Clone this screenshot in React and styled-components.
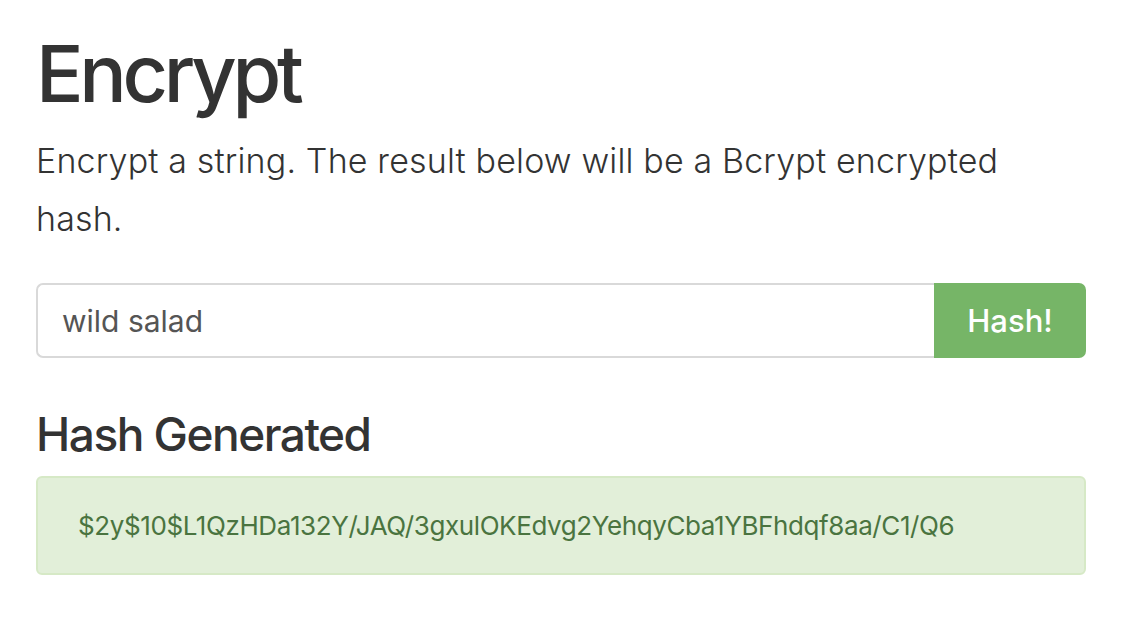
import React from "react";
import styled, { createGlobalStyle } from "styled-components";

const GlobalStyle = createGlobalStyle`
  html, body {
    margin: 0;
    padding: 0;
    background: #ffffff;
  }
  body {
    font-family: Inter, "Liberation Sans", sans-serif;
    color: #333333;
  }
`;

const Container = styled.main`
  width: 1050px;
  padding: 0 36px;
`;

const Title = styled.h1`
  margin: 0;
  padding-top: 23px;
  font-size: 79px;
  line-height: 100px;
  font-weight: 500;
  letter-spacing: -4.3px;
  color: #333333;
`;

const Lead = styled.p`
  max-width: 1010px;
  margin: 9px 0 0;
  font-size: 34px;
  line-height: 58px;
  font-weight: 300;
  letter-spacing: 0.15px;
  color: #333333;
`;

const InputGroup = styled.form`
  display: flex;
  margin-top: 35px;
  height: 75px;
`;

const TextInput = styled.input`
  flex: 1;
  min-width: 0;
  box-sizing: border-box;
  height: 100%;
  padding: 0 24px;
  border: 2px solid #d9d9d9;
  border-right: none;
  border-radius: 7px 0 0 7px;
  font-family: Inter, "Liberation Sans", sans-serif;
  font-size: 30px;
  color: #555555;
  outline: none;
`;

const Button = styled.button`
  width: 152px;
  height: 100%;
  border: none;
  border-radius: 0 7px 7px 0;
  background: #76b567;
  color: #ffffff;
  font-family: Inter, "Liberation Sans", sans-serif;
  font-size: 31px;
  font-weight: 500;
  cursor: pointer;
`;

const Subtitle = styled.h3`
  margin: 48px 0 0;
  font-size: 46px;
  line-height: 56px;
  font-weight: 500;
  letter-spacing: -1.5px;
  color: #333333;
`;

const Alert = styled.div`
  margin-top: 14px;
  box-sizing: border-box;
  height: 99px;
  display: flex;
  align-items: center;
  padding: 0 40px;
  background: #e2efd9;
  border: 2px solid #d6e9c6;
  border-radius: 6px;
  color: #4a7440;
  font-family: Inter, "Liberation Sans", sans-serif;
  font-size: 26px;
  letter-spacing: -0.4px;
`;

export default function App() {
  return (
    <Container>
      <GlobalStyle />
      <Title>Encrypt</Title>
      <Lead>Encrypt a string. The result below will be a Bcrypt encrypted hash.</Lead>
      <InputGroup onSubmit={(e) => e.preventDefault()}>
        <TextInput defaultValue="wild salad" />
        <Button type="submit">Hash!</Button>
      </InputGroup>
      <Subtitle>Hash Generated</Subtitle>
      <Alert>$2y$10$L1QzHDa132Y/JAQ/3gxulOKEdvg2YehqyCba1YBFhdqf8aa/C1/Q6</Alert>
    </Container>
  );
}
